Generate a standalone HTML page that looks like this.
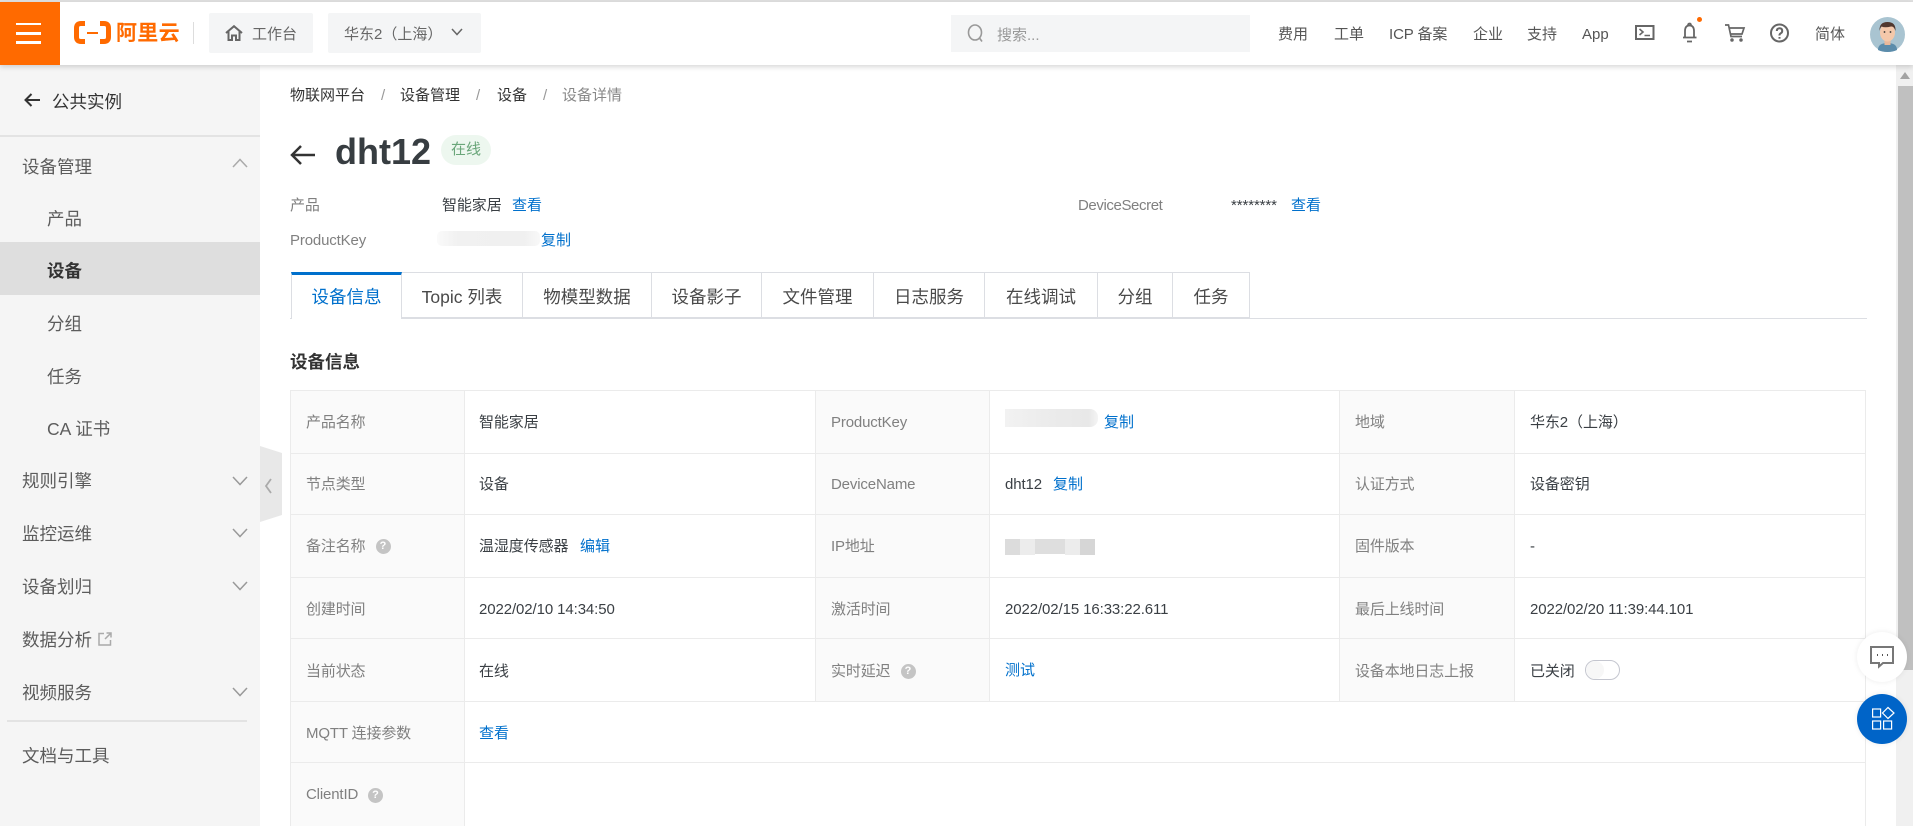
<!DOCTYPE html>
<html lang="zh-CN">
<head>
<meta charset="utf-8">
<title>设备详情</title>
<style>
html,body{margin:0;padding:0;width:1913px;height:826px;overflow:hidden;background:#fff}
body{position:relative;font-family:"Liberation Sans","Noto Sans CJK SC",sans-serif;color:#333;font-size:15px}
.t{position:absolute;white-space:nowrap;line-height:20px;margin-top:1.5px}
.b{position:absolute}
.l{color:#808080;letter-spacing:-.15px}
.v{color:#3a3f44;letter-spacing:-.1px}
.a{color:#0070cc}
.s{font-size:17.5px;color:#5c5c5c;margin-top:.5px}
.nav{color:#555}
.tab{position:absolute;top:272px;height:46px;box-sizing:border-box;border:1px solid #dcdee3;border-left:0;background:#fff;text-align:center;line-height:48px;font-size:17.5px;color:#4a4a4a}
svg{position:absolute;overflow:visible}
.lh{position:absolute;left:290px;width:1576px;height:1px;background:#ebebeb}
.lv{position:absolute;width:1px;background:#ebebeb}
.lbg{position:absolute;background:#fafafa}
.q{position:absolute;width:15px;height:15px;border-radius:50%;background:#c4c4c4;color:#fff;font-size:11px;font-weight:bold;line-height:15px;text-align:center}
</style>
</head>
<body>
<div class="b" style="left:0;top:0;width:1913px;height:2px;background:#e0e0e0"></div>
<div class="b" style="left:0;top:2px;width:1913px;height:63px;background:#fff;box-shadow:0 2px 5px rgba(0,0,0,.16);z-index:5"></div>

<div style="position:absolute;left:0;top:0;width:1913px;height:826px;z-index:6;pointer-events:none">
<div class="b" style="left:0;top:2px;width:60px;height:63px;background:#ff6a00"></div>
<div class="b" style="left:16px;top:22.500px;width:25px;height:2.500px;background:#fff"></div>
<div class="b" style="left:16px;top:32px;width:25px;height:2.500px;background:#fff"></div>
<div class="b" style="left:16px;top:41px;width:25px;height:2.500px;background:#fff"></div>
<svg style="left:0;top:0" width="200" height="65" fill="none" stroke="#ff6a00">
<path d="M85 23.500H81Q76.500 23.500 76.500 28V37Q76.500 41.500 81 41.500H85" stroke-width="5"/>
<path d="M100 23.500H104Q108.500 23.500 108.500 28V37Q108.500 41.500 104 41.500H100" stroke-width="5"/>
<path d="M87 33H98" stroke-width="2"/>
</svg>
<div class="t" style="left:116px;top:21px;font-size:21px;font-weight:bold;color:#ff6a00;line-height:22px;letter-spacing:.3px">阿里云</div>
<div class="b" style="left:193px;top:22px;width:1px;height:22px;background:#ddd"></div>

<div class="b" style="left:209px;top:13px;width:104px;height:40px;background:#f4f5f6;border-radius:2px"></div>
<svg style="left:225px;top:25px" width="18" height="16" fill="none" stroke="#666" stroke-width="2">
<path d="M1 8L9 1.200L17 8M3.500 6.500V15H7V10.500H11V15H14.500V6.500"/>
</svg>
<div class="t nav" style="left:252px;top:23px;color:#666">工作台</div>
<div class="b" style="left:328px;top:13px;width:153px;height:40px;background:#f4f5f6;border-radius:2px"></div>
<div class="t nav" style="left:344px;top:23px;color:#666">华东2（上海）</div>
<svg style="left:451px;top:28px" width="12" height="8" fill="none" stroke="#666" stroke-width="1.500"><path d="M1 1L6 6.500L11 1"/></svg>

<div class="b" style="left:951px;top:15px;width:299px;height:37px;background:#f4f5f6"></div>
<svg style="left:967px;top:24px" width="18" height="19" fill="none" stroke="#999" stroke-width="1.600"><ellipse cx="8" cy="8.500" rx="6.500" ry="7.500"/><path d="M12.500 14L15 17.500"/></svg>
<div class="t" style="left:997px;top:24px;color:#999">搜索...</div>

<div class="t nav" style="left:1278px;top:23px">费用</div>
<div class="t nav" style="left:1334px;top:23px">工单</div>
<div class="t nav" style="left:1389px;top:23px;letter-spacing:-.1px">ICP 备案</div>
<div class="t nav" style="left:1473px;top:23px">企业</div>
<div class="t nav" style="left:1527px;top:23px">支持</div>
<div class="t nav" style="left:1582px;top:23px">App</div>
<svg style="left:1635px;top:25px" width="20" height="15" fill="none" stroke="#666" stroke-width="2">
<rect x="1" y="1" width="17.500" height="13"/><path d="M4.500 4L8 7L4.500 10M9.500 10.500H15" stroke-width="1.600"/>
</svg>
<svg style="left:1682px;top:22px" width="16" height="21" fill="none" stroke="#666" stroke-width="1.800">
<path d="M6 3.500Q6 1.500 7.500 1.500T9 3.500M3 15V9Q3 3.500 7.500 3.500T12 9V15M1 15.500H14.500M5 19.500H10"/>
</svg>
<div class="b" style="left:1696.500px;top:17px;width:5px;height:5px;border-radius:50%;background:#ff6a00"></div>
<svg style="left:1725px;top:24px" width="20" height="18" fill="none" stroke="#666" stroke-width="1.700">
<path d="M0 1H3.500L6 12.500H17M4.500 4H19L17 10H5.500"/><circle cx="7" cy="16" r=".9"/><circle cx="16" cy="16" r=".9"/>
</svg>
<svg style="left:1770px;top:23px" width="20" height="20" fill="none" stroke="#666" stroke-width="2">
<circle cx="9.500" cy="10" r="8.500"/><path d="M6.800 8Q6.800 5.300 9.500 5.300T12.200 8Q12.200 9.500 10.800 10.300T9.500 12.500"/><path d="M9.500 14V15.700"/>
</svg>
<div class="t nav" style="left:1815px;top:23px">简体</div>
<svg style="left:1870px;top:17px" width="35" height="35">
<circle cx="17.500" cy="17.500" r="17.500" fill="#a9c4d1"/>
<path d="M8 33Q8 26 17.500 26T27 33Q23 35 17.500 35T8 33Z" fill="#5b8cab"/>
<rect x="14.500" y="22" width="6" height="6" fill="#eab99b"/>
<ellipse cx="17.500" cy="15.500" rx="7.500" ry="9" fill="#f4c8aa"/>
<path d="M9.500 14Q9 5 17.500 5T25.500 14Q24 9 21 9.500Q15 11 11.500 9.500Q10 11 9.500 14Z" fill="#50372e"/>
<circle cx="14.500" cy="15" r=".9" fill="#333"/><circle cx="20.500" cy="15" r=".9" fill="#333"/>
</svg>
</div>

<!-- sidebar -->
<div class="b" style="left:0;top:65px;width:260px;height:761px;background:#f5f5f5"></div>
<svg style="left:24px;top:92px" width="17" height="16" fill="none" stroke="#333" stroke-width="2"><path d="M7.500 2L1.500 8L7.500 14M2 8H16"/></svg>
<div class="t" style="left:52px;top:90px;font-size:17.500px;color:#333">公共实例</div>
<div class="b" style="left:0;top:135px;width:260px;height:2px;background:#e3e3e3"></div>
<div class="t s" style="left:22px;top:156px">设备管理</div>
<svg style="left:232px;top:158px" width="16" height="10" fill="none" stroke="#aaa" stroke-width="1.500"><path d="M1 9L8 1.500L15 9"/></svg>
<div class="t s" style="left:47px;top:208px">产品</div>
<div class="b" style="left:0;top:242px;width:260px;height:53px;background:#dedede"></div>
<div class="t s" style="left:47px;top:260px;font-weight:bold;color:#333">设备</div>
<div class="t s" style="left:47px;top:313px">分组</div>
<div class="t s" style="left:47px;top:366px">任务</div>
<div class="t s" style="left:47px;top:418px">CA 证书</div>
<div class="t s" style="left:22px;top:470px">规则引擎</div>
<svg style="left:232px;top:476px" width="16" height="10" fill="none" stroke="#999" stroke-width="1.500"><path d="M1 1L8 8.500L15 1"/></svg>
<div class="t s" style="left:22px;top:523px">监控运维</div>
<svg style="left:232px;top:528px" width="16" height="10" fill="none" stroke="#999" stroke-width="1.500"><path d="M1 1L8 8.500L15 1"/></svg>
<div class="t s" style="left:22px;top:576px">设备划归</div>
<svg style="left:232px;top:581px" width="16" height="10" fill="none" stroke="#999" stroke-width="1.500"><path d="M1 1L8 8.500L15 1"/></svg>
<div class="t s" style="left:22px;top:629px">数据分析</div>
<svg style="left:98px;top:632px" width="14" height="14" fill="none" stroke="#aaa" stroke-width="1.500"><path d="M6 1.500H1V13H12.500V8M7 7L13 1M8.500 1H13V5.500"/></svg>
<div class="t s" style="left:22px;top:682px">视频服务</div>
<svg style="left:232px;top:687px" width="16" height="10" fill="none" stroke="#999" stroke-width="1.500"><path d="M1 1L8 8.500L15 1"/></svg>
<div class="b" style="left:7px;top:720px;width:240px;height:2px;background:#e3e3e3"></div>
<div class="t s" style="left:22px;top:745px">文档与工具</div>

<!-- collapse handle -->
<svg style="left:260px;top:446px" width="22" height="76"><path d="M0 0L22 7V69L0 76Z" fill="#e8e8e8"/><path d="M11 33L6 40L11 47" fill="none" stroke="#aaa" stroke-width="1.800"/></svg>

<!-- breadcrumb -->
<div class="t" style="left:290px;top:84px">物联网平台</div>
<div class="t" style="left:381px;top:84px;color:#999">/</div>
<div class="t" style="left:400px;top:84px">设备管理</div>
<div class="t" style="left:476px;top:84px;color:#999">/</div>
<div class="t" style="left:497px;top:84px">设备</div>
<div class="t" style="left:543px;top:84px;color:#999">/</div>
<div class="t" style="left:562px;top:84px;color:#888">设备详情</div>

<!-- title -->
<svg style="left:290px;top:144px" width="26" height="22" fill="none" stroke="#333" stroke-width="2.500"><path d="M11 2L2 11L11 20M2.500 11H25"/></svg>
<div class="t" style="left:335px;top:130px;font-size:36px;font-weight:bold;line-height:40px;color:#373d41">dht12</div>
<div class="b" style="left:441px;top:135px;width:50px;height:30px;border-radius:15px;background:#edf7ef"></div>
<div class="t" style="left:451px;top:138.500px;color:#6aa67a">在线</div>

<div class="t l" style="left:290px;top:194px">产品</div>
<div class="t v" style="left:442px;top:194px">智能家居</div>
<div class="t a" style="left:512px;top:194px">查看</div>
<div class="t l" style="left:290px;top:229px">ProductKey</div>
<div class="b" style="left:437px;top:231px;width:103px;height:15px;background:linear-gradient(90deg,#fafafa,#f1f1f1 20%,#f0f0f0 85%,#f8f8f8);border-radius:5px"></div>
<div class="t a" style="left:541px;top:229px">复制</div>
<div class="t l" style="left:1078px;top:194px;letter-spacing:-.4px">DeviceSecret</div>
<div class="t v" style="left:1231px;top:194px">********</div>
<div class="t a" style="left:1291px;top:194px">查看</div>

<!-- tabs -->
<div class="b" style="left:290px;top:318px;width:1577px;height:1px;background:#dcdee3"></div>
<div class="tab" style="left:291px;width:111px;height:47px;border-top:3px solid #0070cc;border-left:1px solid #dcdee3;border-bottom:0;line-height:45px;color:#0070cc">设备信息</div>
<div class="tab" style="left:402px;width:121px">Topic 列表</div>
<div class="tab" style="left:523px;width:129px">物模型数据</div>
<div class="tab" style="left:652px;width:110px">设备影子</div>
<div class="tab" style="left:762px;width:112px">文件管理</div>
<div class="tab" style="left:874px;width:111px">日志服务</div>
<div class="tab" style="left:985px;width:113px">在线调试</div>
<div class="tab" style="left:1098px;width:75px">分组</div>
<div class="tab" style="left:1173px;width:77px">任务</div>

<div class="t" style="left:290px;top:350px;font-size:17.500px;font-weight:bold;color:#333">设备信息</div>

<!-- table -->
<div class="lbg" style="left:291px;top:391px;width:173px;height:435px"></div>
<div class="lbg" style="left:816px;top:391px;width:173px;height:310px"></div>
<div class="lbg" style="left:1340px;top:391px;width:174px;height:310px"></div>
<div class="lh" style="top:390px"></div>
<div class="lh" style="top:453px"></div>
<div class="lh" style="top:514px"></div>
<div class="lh" style="top:577px"></div>
<div class="lh" style="top:638px"></div>
<div class="lh" style="top:701px"></div>
<div class="lh" style="top:762px"></div>
<div class="lv" style="left:290px;top:390px;height:436px"></div>
<div class="lv" style="left:464px;top:390px;height:436px"></div>
<div class="lv" style="left:815px;top:390px;height:311px"></div>
<div class="lv" style="left:989px;top:390px;height:311px"></div>
<div class="lv" style="left:1339px;top:390px;height:311px"></div>
<div class="lv" style="left:1514px;top:390px;height:311px"></div>
<div class="lv" style="left:1865px;top:390px;height:436px"></div>

<div class="t l" style="left:306px;top:411px">产品名称</div>
<div class="t v" style="left:479px;top:411px">智能家居</div>
<div class="t l" style="left:831px;top:411px">ProductKey</div>
<div class="b" style="left:1005px;top:409px;width:93px;height:18px;background:linear-gradient(90deg,#f2f2f2,#ebebeb 50%,#e8e8e8 90%,#f4f4f4);border-radius:0 8px 8px 0"></div>
<div class="t a" style="left:1104px;top:411px">复制</div>
<div class="t l" style="left:1355px;top:411px">地域</div>
<div class="t v" style="left:1530px;top:411px">华东2（上海）</div>

<div class="t l" style="left:306px;top:473px">节点类型</div>
<div class="t v" style="left:479px;top:473px">设备</div>
<div class="t l" style="left:831px;top:473px">DeviceName</div>
<div class="t v" style="left:1005px;top:473px">dht12</div>
<div class="t a" style="left:1053px;top:473px">复制</div>
<div class="t l" style="left:1355px;top:473px">认证方式</div>
<div class="t v" style="left:1530px;top:473px">设备密钥</div>

<div class="t l" style="left:306px;top:535px">备注名称</div>
<div class="q" style="left:375.500px;top:538.500px">?</div>
<div class="t v" style="left:479px;top:535px">温湿度传感器</div>
<div class="t a" style="left:580px;top:535px">编辑</div>
<div class="t l" style="left:831px;top:535px">IP地址</div>
<div class="b" style="left:1005px;top:539px;width:15px;height:16px;background:#dcdcdc"></div>
<div class="b" style="left:1020px;top:539px;width:15px;height:16px;background:#ececec"></div>
<div class="b" style="left:1035px;top:539px;width:30px;height:15px;background:#dedede"></div>
<div class="b" style="left:1065px;top:539px;width:15px;height:16px;background:#ececec"></div>
<div class="b" style="left:1080px;top:539px;width:15px;height:16px;background:#d6d6d6"></div>
<div class="t l" style="left:1355px;top:535px">固件版本</div>
<div class="t v" style="left:1530px;top:535px">-</div>

<div class="t l" style="left:306px;top:598px">创建时间</div>
<div class="t v" style="left:479px;top:598px">2022/02/10 14:34:50</div>
<div class="t l" style="left:831px;top:598px">激活时间</div>
<div class="t v" style="left:1005px;top:598px">2022/02/15 16:33:22.611</div>
<div class="t l" style="left:1355px;top:598px">最后上线时间</div>
<div class="t v" style="left:1530px;top:598px">2022/02/20 11:39:44.101</div>

<div class="t l" style="left:306px;top:660px">当前状态</div>
<div class="t v" style="left:479px;top:660px">在线</div>
<div class="t l" style="left:831px;top:660px">实时延迟</div>
<div class="q" style="left:900.500px;top:663.500px">?</div>
<div class="t a" style="left:1005px;top:659px">测试</div>
<div class="t l" style="left:1355px;top:660px">设备本地日志上报</div>
<div class="t v" style="left:1530px;top:660px">已关闭</div>
<div class="b" style="left:1585px;top:660px;width:35px;height:20px;box-sizing:border-box;border:1px solid #c4c6cf;border-radius:10px;background:#fff"></div>
<div class="b" style="left:1586px;top:661px;width:18px;height:18px;border-radius:50%;background:#f7f7f7"></div>

<div class="t l" style="left:306px;top:722px">MQTT 连接参数</div>
<div class="t a" style="left:479px;top:722px">查看</div>
<div class="t l" style="left:306px;top:783px">ClientID</div>
<div class="q" style="left:368px;top:787.500px">?</div>

<!-- scrollbar -->
<div class="b" style="left:1896px;top:65px;width:17px;height:761px;background:#f0f0f0"></div>
<div class="b" style="left:1898px;top:86px;width:15px;height:584px;background:#c0c0c0"></div>
<svg style="left:1900px;top:72px" width="10" height="7"><path d="M5 0L10 7H0Z" fill="#a3a3a3"/></svg>

<!-- floating buttons -->
<div class="b" style="left:1857px;top:632px;width:50px;height:50px;border-radius:50%;background:#fff;box-shadow:0 0 6px rgba(0,0,0,.08)"></div>
<svg style="left:1870px;top:646px" width="24" height="22" fill="none" stroke="#777" stroke-width="2"><path d="M1 1H23V17H13L9 20.500V17H1Z"/><path d="M7 9H8M12 9H13M17 9H18" stroke="#555" stroke-width="2"/></svg>
<div class="b" style="left:1857px;top:694px;width:50px;height:50px;border-radius:50%;background:#0064c8;box-shadow:0 0 6px rgba(0,0,0,.08)"></div>
<svg style="left:1872px;top:707px" width="24" height="24" fill="none" stroke="#fff" stroke-width="1.200"><rect x=".6" y="2" width="8" height="8"/><rect x=".6" y="14" width="8" height="8"/><rect x="11.600" y="14" width="8" height="8"/><path d="M16 .5L22 6L16 11.500L10.500 6Z"/></svg>
</body>
</html>
